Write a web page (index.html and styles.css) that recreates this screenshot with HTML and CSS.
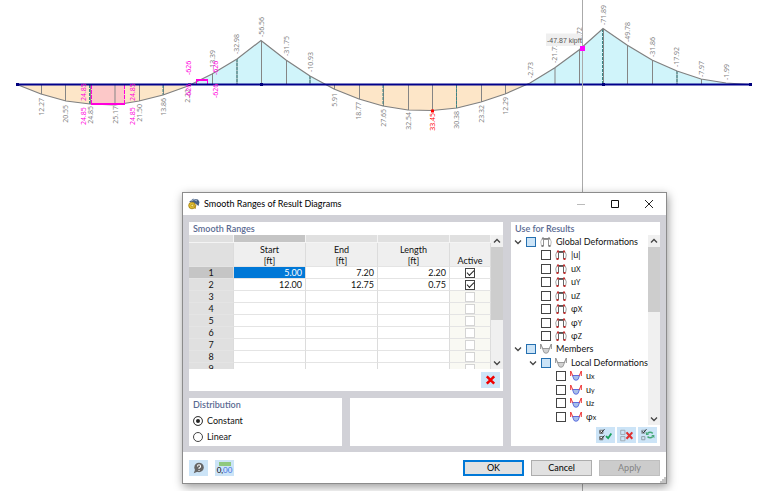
FILE: index.html
```
<!DOCTYPE html>
<html lang="en">
<head>
  <meta charset="UTF-8">
  <meta name="viewport" content="width=device-width, initial-scale=1.0">
  <title>Smooth Ranges of Result Diagrams</title>
  <link rel="stylesheet" href="styles.css">
</head>
<body>
<svg width="0" height="0" class="symbols">
  <symbol id="frame" viewBox="0 0 12 10"><path d="M3.500 9V2.500H8.500V9" fill="none" stroke="#666" stroke-width="1"/><path d="M1.500 9Q-.3 4.500 2 1.500M10.500 9Q12.300 4.500 10 1.500" fill="none" stroke="#999" stroke-width=".9"/><path d="M2.500 1.500H9.500" stroke="#555"/><path class="dots" d="M2 .5h2v2H2zM8 .5h2v2H8zM1.500 8h2v2h-2zM8.500 8h2v2h-2z"/></symbol>
  <symbol id="member" viewBox="0 0 12 10"><path class="bowl" d="M2.500 4.500H9.500L8 8.500Q6 10 4 8.500z"/><path class="horns" d="M.7 5V0L2.800 4.800M11.300 5V0L9.200 4.800" fill="none"/></symbol>
  <symbol id="down" viewBox="0 0 8 8"><path d="M1 2.500L4 5.500L7 2.500" fill="none" stroke="#444" stroke-width="1.300"/></symbol>
  <symbol id="up" viewBox="0 0 8 8"><path d="M1 5.500L4 2.500L7 5.500" fill="none" stroke="#444" stroke-width="1.300"/></symbol>
</svg>

<svg class="diagram" viewBox="0 0 760 491">
  <g class="pos">
    <path d="M17 84.500L41 94L66 101L90 104L115 105L139 101L163 95L188 86L192 84.500z"/>
    <path d="M326 84.500L334 89L359 99L383 106L408 110L432 110.500L457 108L481 102L505 94L527 84.500z"/>
  </g>
  <g class="neg">
    <path d="M192 84.500L212 74L237 59L261 40.500L286 60L310 76L326 84.500z"/>
    <path d="M527 84.500L554.500 68L579 50L603 28.500L627 45L652 60L677 71L701 79L726 83L750 84.500z"/>
  </g>
  <path class="smooth" d="M91 85H125V104H91z"/>
  <path class="ordinate" d="M41.500 85V94M65.500 85V101M90.500 85V104M115 85V104M139.500 85V101M163.500 85V95M212.500 74V84M237 59V84M261.500 41V84M286.500 60V84M310 76V84M334.500 85V89M359.500 85V99M383.500 85V106M408.500 85V110M432.500 85V110M456.500 85V108M481.500 85V102M505.500 85V94M555 68V84M579.500 50V84M603.500 29V84M627.500 45V84M652.500 60V84M677 71V84M701.500 79V84"/>
  <path class="ribs" d="M89.500 85V104M163 85V95M237 59V84M310 76V84M383 85V106M456.500 85V108M602.500 29V84M677 71V84"/>
  <path class="curve" d="M17 84.500L41 94L66 101L90 104L115 105L139 101L163 95L188 86L212 74L237 59L261 40.500L286 60L310 76L334 89L359 99L383 106L408 110L432 110.500L457 108L481 102L505 94L530 83L554.500 68L579 50L603 28.500L627 45L652 60L677 71L701 79L726 83L750 84.500"/>
  <path class="range" d="M91 104H125M196 80H208"/>
  <path class="range-side" d="M91.500 85V104M124.500 85V104M196.500 80V84M207.500 80V84"/>
  <path class="beam" d="M17 84.500H750"/>
  <path class="joint" d="M16 83h3v3h-3zM188 83.500h3v2h-3zM260 83h3v3h-3zM602 83h3v3h-3zM749 83h3v3h-3z"/>
  <path class="max" d="M431 109.500h3v3h-3z"/>
  <g class="values low">
    <text transform="translate(44 98) rotate(-90)">12.27</text>
    <text transform="translate(68 105) rotate(-90)">20.55</text>
    <text transform="translate(93 106) rotate(-90)">24.85</text>
    <text transform="translate(118 106) rotate(-90)">25.17</text>
    <text transform="translate(142 104) rotate(-90)">21.50</text>
    <text transform="translate(166 98) rotate(-90)">13.86</text>
    <text transform="translate(190 89) rotate(-90)">2.22</text>
    <text transform="translate(337 93) rotate(-90)">5.91</text>
    <text transform="translate(361 102) rotate(-90)">18.77</text>
    <text transform="translate(386 109) rotate(-90)">27.65</text>
    <text transform="translate(411 112) rotate(-90)">32.54</text>
    <text class="peak" transform="translate(435 113) rotate(-90)">33.45</text>
    <text transform="translate(459 111) rotate(-90)">30.38</text>
    <text transform="translate(484 105) rotate(-90)">23.32</text>
    <text transform="translate(508 97) rotate(-90)">12.29</text>
  </g>
  <g class="values">
    <text transform="translate(215 70) rotate(-90)">-13.39</text>
    <text transform="translate(239 54) rotate(-90)">-32.98</text>
    <text transform="translate(264 37) rotate(-90)">-56.56</text>
    <text transform="translate(289 56) rotate(-90)">-31.75</text>
    <text transform="translate(313 72) rotate(-90)">-10.93</text>
    <text transform="translate(533 78) rotate(-90)">-2.73</text>
    <text transform="translate(557 63) rotate(-90)">-21.73</text>
    <text transform="translate(582 47) rotate(-90)">-45.72</text>
    <text transform="translate(606 25) rotate(-90)">-71.89</text>
    <text transform="translate(630 42) rotate(-90)">-49.78</text>
    <text transform="translate(655 57) rotate(-90)">-31.86</text>
    <text transform="translate(679 67) rotate(-90)">-17.92</text>
    <text transform="translate(704 77) rotate(-90)">-7.97</text>
    <text transform="translate(729 80) rotate(-90)">-1.99</text>
  </g>
  <g class="values range-values">
    <text transform="translate(86 101) rotate(-90)">24.85</text>
    <text transform="translate(86 125) rotate(-90)">24.85</text>
    <text transform="translate(135 101) rotate(-90)">24.85</text>
    <text transform="translate(135 125) rotate(-90)">24.85</text>
    <text transform="translate(191 75) rotate(-90)">-626</text>
    <text transform="translate(191 98) rotate(-90)">-626</text>
    <text transform="translate(218 75) rotate(-90)">-626</text>
    <text transform="translate(218 98) rotate(-90)">-626</text>
  </g>
  <path class="cursor" d="M582.500 0V491"/>
  <path class="tip" d="M546 33.500H581V46H546z"/>
  <text class="tip-text" x="547" y="43">-47.87 kipft</text>
  <path class="pick" d="M580 46h5v5h-5z"/>
</svg>

<section class="dialog" role="dialog" aria-label="Smooth Ranges of Result Diagrams">
  <header class="titlebar">
    <svg class="app-icon" viewBox="0 0 12 12"><path d="M1 4L5 .8L10 1.500L11.500 4L10.500 8L8 6L4 4z" fill="#465f83"/><path d="M3 3L6 1.500L9 3" stroke="#a9bad0" fill="none"/><circle cx="4" cy="7.500" r="3.300" fill="#e5c12d" stroke="#9c7a13" stroke-width=".8"/><circle cx="4.300" cy="7.500" r="1.300" fill="#f7e98b" stroke="#9c7a13" stroke-width=".6"/><path d="M8 6.500L7 11" stroke="#b78b1b"/></svg>
    <h1>Smooth Ranges of Result Diagrams</h1>
    <button class="win" aria-label="Minimize"><svg viewBox="0 0 10 10"><path d="M1 5.500H9" stroke="#bbb"/></svg></button>
    <button class="win" aria-label="Maximize"><svg viewBox="0 0 10 10"><path d="M1.500 1.500H8.500V8.500H1.500z" fill="none" stroke="#111"/></svg></button>
    <button class="win" aria-label="Close"><svg viewBox="0 0 10 10"><path d="M1 1L9 9M9 1L1 9" stroke="#222"/></svg></button>
  </header>

  <div class="content">
    <div class="left">
      <section class="panel ranges">
        <h2>Smooth Ranges</h2>
        <div class="grid-view">
          <div class="grid-clip">
            <table>
              <thead>
                <tr class="strip"><td></td><td class="current"></td><td></td><td></td><td></td></tr>
                <tr class="heads"><th class="num"></th><th>Start<br>[ft]</th><th>End<br>[ft]</th><th>Length<br>[ft]</th><th>Active</th></tr>
              </thead>
              <tbody>
                <tr><th class="current">1</th><td class="selected">5.00</td><td>7.20</td><td>2.20</td><td class="active on"><input type="checkbox" aria-label="Range 1 active" checked></td></tr>
                <tr><th>2</th><td>12.00</td><td>12.75</td><td>0.75</td><td class="active on"><input type="checkbox" aria-label="Range 2 active" checked></td></tr>
                <tr><th>3</th><td></td><td></td><td></td><td class="active"><input type="checkbox" aria-label="Range 3 active" disabled></td></tr>
                <tr><th>4</th><td></td><td></td><td></td><td class="active"><input type="checkbox" aria-label="Range 4 active" disabled></td></tr>
                <tr><th>5</th><td></td><td></td><td></td><td class="active"><input type="checkbox" aria-label="Range 5 active" disabled></td></tr>
                <tr><th>6</th><td></td><td></td><td></td><td class="active"><input type="checkbox" aria-label="Range 6 active" disabled></td></tr>
                <tr><th>7</th><td></td><td></td><td></td><td class="active"><input type="checkbox" aria-label="Range 7 active" disabled></td></tr>
                <tr><th>8</th><td></td><td></td><td></td><td class="active"><input type="checkbox" aria-label="Range 8 active" disabled></td></tr>
                <tr><th>9</th><td></td><td></td><td></td><td class="active"><input type="checkbox" aria-label="Range 9 active" disabled></td></tr>
              </tbody>
            </table>
          </div>
          <div class="scroll">
            <svg><use href="#up"/></svg><div class="thumb"></div><svg><use href="#down"/></svg>
          </div>
        </div>
        <div class="tools">
          <button class="tool" aria-label="Delete"><svg viewBox="0 0 18 14"><path d="M5.500 3.500L12.500 10.500M12.500 3.500L5.500 10.500" stroke="#f00000" stroke-width="2.400"/></svg></button>
        </div>
      </section>
      <div class="lower">
        <section class="panel distribution">
          <h2>Distribution</h2>
          <label><input type="radio" name="distribution" checked>Constant</label>
          <label><input type="radio" name="distribution">Linear</label>
        </section>
        <section class="panel"></section>
      </div>
    </div>

    <section class="panel results">
      <h2>Use for Results</h2>
      <div class="tree-view">
        <div class="tree-clip">
          <div class="tree">
            <div class="node"><svg class="fold"><use href="#down"/></svg><label><input type="checkbox" class="mixed"><svg class="kind gray"><use href="#frame"/></svg>Global Deformations</label></div>
            <div class="node leaf"><label><input type="checkbox"><svg class="kind"><use href="#frame"/></svg>|u|</label></div>
            <div class="node leaf"><label><input type="checkbox"><svg class="kind"><use href="#frame"/></svg><span>u<small>X</small></span></label></div>
            <div class="node leaf"><label><input type="checkbox"><svg class="kind"><use href="#frame"/></svg><span>u<small>Y</small></span></label></div>
            <div class="node leaf"><label><input type="checkbox"><svg class="kind"><use href="#frame"/></svg><span>u<small>Z</small></span></label></div>
            <div class="node leaf"><label><input type="checkbox"><svg class="kind"><use href="#frame"/></svg><span>φ<small>X</small></span></label></div>
            <div class="node leaf"><label><input type="checkbox"><svg class="kind"><use href="#frame"/></svg><span>φ<small>Y</small></span></label></div>
            <div class="node leaf"><label><input type="checkbox"><svg class="kind"><use href="#frame"/></svg><span>φ<small>Z</small></span></label></div>
            <div class="node"><svg class="fold"><use href="#down"/></svg><label><input type="checkbox" class="mixed"><svg class="kind gray"><use href="#member"/></svg>Members</label></div>
            <div class="node child"><svg class="fold"><use href="#down"/></svg><label><input type="checkbox" class="mixed"><svg class="kind gray"><use href="#member"/></svg>Local Deformations</label></div>
            <div class="node deep"><label><input type="checkbox"><svg class="kind"><use href="#member"/></svg><span>u<small>x</small></span></label></div>
            <div class="node deep"><label><input type="checkbox"><svg class="kind"><use href="#member"/></svg><span>u<small>y</small></span></label></div>
            <div class="node deep"><label><input type="checkbox"><svg class="kind"><use href="#member"/></svg><span>u<small>z</small></span></label></div>
            <div class="node deep"><label><input type="checkbox"><svg class="kind"><use href="#member"/></svg><span>φ<small>x</small></span></label></div>
            <div class="node deep"><label><input type="checkbox" aria-label="Next result"></label></div>
          </div>
        </div>
        <div class="scroll tree-scroll">
          <svg><use href="#up"/></svg><div class="thumb"></div><svg><use href="#down"/></svg>
        </div>
      </div>
      <div class="tools">
        <button class="tool" aria-label="Select all"><svg viewBox="0 0 18 14"><path d="M3.500 2.500h3v3h-3zM3.500 8.500h3v3h-3z" fill="#fff" stroke="#555" stroke-width=".8"/><path d="M4 3.500L5 5L8 1.500M4 9.500L5 11L8 7.500" fill="none" stroke="#222" stroke-width=".9"/><path d="M9.500 8L11.500 10L14.500 5.500" fill="none" stroke="#18a05a" stroke-width="1.700"/></svg></button>
        <button class="tool" aria-label="Deselect all"><svg viewBox="0 0 18 14"><path d="M3.500 2.500h4v4h-4zM3.500 8.500h4v4h-4z" fill="none" stroke="#9aa4ac" stroke-width=".8"/><path d="M9 4.500L14.500 10.500M14.500 4.500L9 10.500" stroke="#e03030" stroke-width="2"/></svg></button>
        <button class="tool" aria-label="Invert selection"><svg viewBox="0 0 18 14"><path d="M3.500 2.500h3v3h-3zM3.500 8.500h3v3h-3z" fill="none" stroke="#8a949c" stroke-width=".8"/><path d="M4 3.500L5 5L8 1.500" fill="none" stroke="#222" stroke-width=".9"/><path d="M14 5.500Q11.500 3.500 9 5.500M9 8.500Q11.500 10.500 14 8.500" fill="none" stroke="#46a878" stroke-width="1.400"/><path d="M7.500 4V7H10.500zM15.500 10V7H12.500z" fill="#46a878"/></svg></button>
      </div>
    </section>
  </div>

  <footer>
    <button class="tool" aria-label="Help"><svg viewBox="0 0 18 14"><circle cx="9.500" cy="6.500" r="4.500" fill="#666"/><path d="M6 8L4.500 12L9 10z" fill="#666"/><path d="M8 5.500Q8 4 9.500 4T11 5.500Q11 6.500 9.500 7V8M9.500 8.800V9.800" fill="none" stroke="#fff" stroke-width="1"/></svg></button>
    <button class="tool units" aria-label="Units and decimal places"><span class="ruler"></span><span>0,<i>00</i></span></button>
    <div class="actions">
      <button class="btn ok">OK</button>
      <button class="btn">Cancel</button>
      <button class="btn" disabled>Apply</button>
    </div>
    <svg class="grip" viewBox="0 0 6 6"><path d="M4 0h2v2H4zM2 2h2v2H2zM4 2h2v2H4zM0 4h2v2H0zM2 4h2v2H2zM4 4h2v2H4z"/></svg>
  </footer>
</section>
</body>
</html>
```
FILE: styles.css
```
* {
  box-sizing: border-box;
}
body {
  margin: 0;
  min-height: 100vh;
  background: #fff;
  color: #111;
  font: 9px/12px Lato, "Open Sans", sans-serif;
  overflow: hidden;
}
button, input {
  margin: 0;
  padding: 0;
  font: inherit;
}
h1, h2 {
  margin: 0;
  font-weight: normal;
}
.symbols {
  position: absolute;
}

/* result diagram */
.diagram {
  display: block;
  width: 100%;
}
.pos { fill: #fde6c8; }
.neg { fill: #d0f4fa; }
.smooth { fill: #fcc8c8; }
.ordinate {
  stroke: #858585;
}
.ribs {
  stroke: #3a8585;
  stroke-dasharray: 3 1;
}
.curve {
  fill: none;
  stroke: #808080;
  stroke-width: 1.2;
}
.range, .range-side {
  fill: none;
  stroke: #ff00dc;
}
.range { stroke-width: 2; }
.range-side { stroke-dasharray: 4 1; }
.beam {
  stroke: #00008b;
  stroke-width: 2;
}
.joint { fill: #00007d; }
.max { fill: red; }
.values {
  font: 7px "Open Sans", sans-serif;
  fill: #808080;
}
.low { text-anchor: end; }
.values .peak { fill: red; }
.range-values { fill: #ff00dc; }
.cursor { stroke: #aaa; }
.tip { fill: #efefef; }
.tip-text {
  font: 7px "Liberation Sans", sans-serif;
  fill: #555;
}
.pick { fill: #ff00ff; }

/* dialog window */
.dialog {
  position: absolute;
  left: 182px;
  top: 192px;
  width: 485px;
  border: 1px solid #8c8c8c;
  background: #fff;
  box-shadow: 1px 3px 9px rgba(0, 0, 0, 0.4);
}
.titlebar {
  display: flex;
  align-items: center;
  height: 22px;
  padding-left: 5px;
}
.titlebar h1 {
  flex: 1;
  padding-left: 4px;
  font-size: 9px;
  color: #000;
}
.app-icon {
  width: 12px;
  height: 12px;
}
.win {
  display: flex;
  align-items: center;
  justify-content: center;
  width: 34px;
  height: 20px;
  border: 0;
  background: none;
}
.win svg {
  width: 10px;
  height: 10px;
}
.content {
  display: flex;
  gap: 8px;
  padding: 7px 6px 6px;
  background: #d1d1d7;
}
.left {
  flex: 1;
  display: flex;
  flex-direction: column;
  gap: 7px;
}
.panel {
  background: #fff;
}
.panel h2 {
  height: 13px;
  padding-left: 4px;
  font-size: 9px;
  line-height: 13px;
  font-weight: 600;
  color: #5a6a92;
}
.grid-view, .tree-view {
  display: flex;
}
.grid-clip {
  flex: 1;
  height: 134px;
  overflow: hidden;
}
table {
  width: 100%;
  table-layout: fixed;
  border-collapse: separate;
  border-spacing: 0;
}
td, th {
  height: 12px;
  padding: 0 3px 0 0;
  border-right: 1px solid #dcdcdc;
  border-bottom: 1px solid #e4e4e4;
  font-weight: normal;
  text-align: right;
  line-height: 11px;
}
th {
  padding: 0;
  text-align: center;
  background: #e0e0e0;
}
.strip td {
  width: 72px;
  height: 8px;
  background: #e0e0e0;
  border-color: #f4f4f4;
}
.strip td:first-child { width: 45px; }
.strip td:last-child { width: 41px; }
.strip td.current, th.current {
  background: #c5c5c5;
}
.heads th {
  height: 24px;
  background: #efefef;
  vertical-align: bottom;
}
.heads .num { background: #e0e0e0; }
.selected {
  background: #0078d7;
  color: #fff;
}
.active {
  padding: 0;
  text-align: center;
  background: #f9f9f3;
}
.on { background: #fff; }
input[type="checkbox"] {
  appearance: none;
  display: block;
  width: 10px;
  height: 10px;
  flex: none;
  border: 1px solid #444;
  background: #fff;
}
.active input[type="checkbox"] {
  margin: 0 auto;
}
input[type="checkbox"]:disabled {
  border-color: #d4d4d4;
}
input[type="checkbox"]:checked::after {
  content: "";
  display: block;
  width: 6px;
  height: 3px;
  margin: 1px;
  border-left: 1px solid #222;
  border-bottom: 1px solid #222;
  transform: rotate(-45deg);
}
input.mixed[type="checkbox"] {
  background: #cce4f7;
  border-color: #2670b0;
}
.scroll {
  display: flex;
  flex-direction: column;
  justify-content: space-between;
  align-items: center;
  width: 12px;
  background: #f0f0f0;
}
.scroll svg {
  width: 8px;
  height: 8px;
  margin: 2px 0;
}
.thumb {
  width: 12px;
  height: 73px;
  margin-bottom: auto;
  background: #cdcdcd;
}
.tree-scroll .thumb { height: 65px; }
.tools {
  display: flex;
  justify-content: flex-end;
  gap: 2px;
  padding: 3px 3px;
}
.tool {
  width: 19px;
  height: 16px;
  border: 0;
  background: #cce4f7;
}
.tool svg {
  display: block;
  width: 100%;
  height: 100%;
}
.lower {
  display: flex;
  gap: 8px;
}
.lower .panel {
  flex: 1;
}
.distribution {
  padding-bottom: 1px;
}
.distribution h2 {
  margin-bottom: 2px;
}
.distribution label {
  display: flex;
  align-items: center;
  gap: 4px;
  height: 16px;
  padding-left: 4px;
}
input[type="radio"] {
  appearance: none;
  width: 10px;
  height: 10px;
  border: 1px solid #444;
  border-radius: 50%;
}
input[type="radio"]:checked {
  background: #222;
  box-shadow: inset 0 0 0 2px #fff;
}

/* results tree */
.results {
  width: 149px;
}
.results .tools {
  padding-top: 2px;
}
.tree-clip {
  flex: 1;
  height: 190px;
  overflow: hidden;
}
.tree {
  display: flex;
  flex-direction: column;
  height: 202px;
}
.node {
  flex: 1;
  display: flex;
  align-items: center;
  padding-left: 3px;
  white-space: nowrap;
}
.leaf { padding-left: 30px; }
.child { padding-left: 18px; }
.deep { padding-left: 45px; }
.node label {
  display: flex;
  align-items: center;
  gap: 4px;
}
.fold {
  flex: none;
  width: 8px;
  height: 8px;
  margin-right: 4px;
}
.kind {
  flex: none;
  width: 12px;
  height: 10px;
}
.dots { fill: #c03030; }
.bowl {
  fill: #a9c0e8;
  stroke: #5c6ee0;
}
.horns { stroke: #ee3030; }
.kind.gray {
  filter: grayscale(1);
  opacity: 0.7;
}
small {
  font-size: 7px;
}

footer {
  display: flex;
  align-items: flex-start;
  gap: 7px;
  padding: 8px 0 0 6px;
}
.units {
  font-size: 8px;
  line-height: 9px;
}
.ruler {
  display: block;
  width: 12px;
  height: 4px;
  margin: 0 auto;
  background: #8fc97f;
}
.units i {
  font-style: normal;
  color: #3f6fe0;
}
.actions {
  display: flex;
  flex: 1;
  justify-content: flex-end;
  gap: 7px;
  padding-bottom: 7px;
}
.btn {
  width: 61px;
  height: 16px;
  border: 1px solid #adadad;
  background: #e1e1e1;
  line-height: 12px;
}
.ok {
  border: 2px solid #0078d7;
}
.btn:disabled {
  background: #ccc;
  border-color: #bfbfbf;
  color: #838383;
}
.grip {
  align-self: flex-end;
  width: 6px;
  height: 6px;
  margin-left: -7px;
  fill: #c4c4c4;
}
```
